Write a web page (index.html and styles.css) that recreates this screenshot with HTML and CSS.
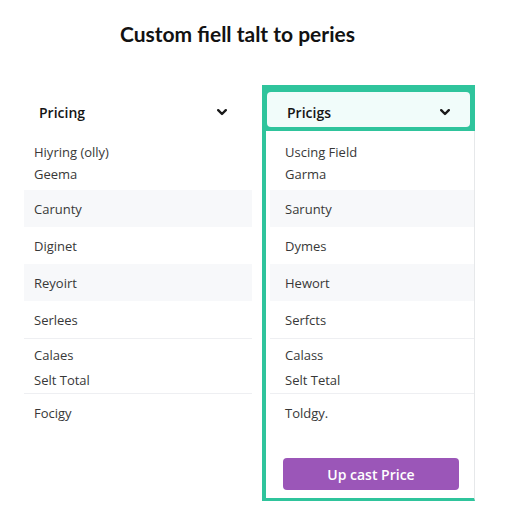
FILE: index.html
```html
<!DOCTYPE html>
<html>
<head>
<meta charset="utf-8">
<link rel="stylesheet" href="styles.css">
</head>
<body>
<div class="page">
  <h1 class="title">Custom fiell talt to peries</h1>
  <div class="columns">
    <div class="panel-left">
      <div class="head-left">
        <span class="head-label">Pricing</span>
        <svg class="chev" width="10" height="7" viewBox="0 0 10 7"><path d="M1.2 1.2 L5 5 L8.8 1.2" fill="none" stroke="#1a1a1a" stroke-width="2.4" stroke-linecap="round" stroke-linejoin="round"/></svg>
      </div>
      <div class="list">
        <div class="row group first"><span>Hiyring (olly)</span><span>Geema</span></div>
        <div class="row stripe">Caruntу</div>
        <div class="row">Diginet</div>
        <div class="row stripe">Reyoirt</div>
        <div class="row line">Serlees</div>
        <div class="row group second line"><span>Calaes</span><span>Selt Total</span></div>
        <div class="row">Focigy</div>
      </div>
    </div>
    <div class="panel-right">
      <div class="head-wrap">
        <div class="head-right">
          <span class="head-label">Pricigs</span>
          <svg class="chev" width="10" height="7" viewBox="0 0 10 7"><path d="M1.2 1.2 L5 5 L8.8 1.2" fill="none" stroke="#1a1a1a" stroke-width="2.4" stroke-linecap="round" stroke-linejoin="round"/></svg>
        </div>
      </div>
      <div class="body-right">
        <div class="list">
          <div class="row group first"><span>Uscing Field</span><span>Garma</span></div>
          <div class="row stripe">Saruntу</div>
          <div class="row">Dymes</div>
          <div class="row stripe">Hewort</div>
          <div class="row line">Serfcts</div>
          <div class="row group second line"><span>Calass</span><span>Selt Tetal</span></div>
          <div class="row">Toldgy.</div>
        </div>
        <button class="cta">Up cast Price</button>
      </div>
    </div>
  </div>
</div>
</body>
</html>
```

FILE: styles.css
```css
html, body {
  margin: 0;
  padding: 0;
  background: #ffffff;
}
body {
  width: 512px;
  height: 512px;
  overflow: hidden;
  font-family: "Open Sans", "Liberation Sans", sans-serif;
  color: #2e2e2e;
}
.page {
  padding-top: 19px;
}
.title {
  margin: 0 0 0 120px;
  font-family: Lato, "Open Sans", sans-serif;
  font-weight: 700;
  font-size: 21px;
  line-height: 29px;
  color: #121212;
}
.columns {
  display: flex;
  margin-top: 37px;
  padding-left: 24px;
  gap: 10px;
  align-items: flex-start;
}
.panel-left {
  width: 228px;
  padding-top: 7px;
}
.head-left {
  height: 35px;
  box-sizing: border-box;
  padding: 5px 25px 0 15px;
  display: flex;
  align-items: center;
  justify-content: space-between;
  margin-bottom: 4px;
}
.head-label {
  font-family: "Open Sans", sans-serif;
  font-weight: 600;
  font-size: 14px;
  color: #151515;
}
.chev {
  display: block;
}
.list {
  display: flex;
  flex-direction: column;
}
.row {
  font-size: 13px;
  line-height: 18px;
  padding: 0 0 0 10px;
  height: 37px;
  display: flex;
  align-items: center;
  color: #383838;
}
.row.stripe {
  background: #f7f8fa;
}
.row.line {
  border-bottom: 1px solid #eeeff2;
}
.row.group {
  flex-direction: column;
  align-items: flex-start;
  justify-content: flex-start;
  box-sizing: border-box;
}
.row.group span {
  display: block;
  line-height: 22px;
}
.row.first {
  height: 59px;
  padding-top: 10px;
}
.row.second {
  height: 55px;
  padding-top: 4px;
}
.row.second span {
  line-height: 25px;
}
.panel-right {
  width: 213px;
}
.head-wrap {
  background: #2fc49c;
  padding: 7px 5px 4px 5px;
}
.head-right {
  height: 35px;
  box-sizing: border-box;
  padding: 5px 20px 0 20px;
  background: #f1fcfa;
  border-radius: 4px;
  display: flex;
  align-items: center;
  justify-content: space-between;
}
.body-right {
  border-left: 4px solid #2fc49c;
  border-right: 1px solid #e6e8ea;
  border-bottom: 3px solid #2fc49c;
  padding: 0 0 8px 4px;
  background: #fff;
}
.body-right .row {
  padding-left: 15px;
}
.cta {
  display: block;
  margin: 27px 15px 0 13px;
  width: 176px;
  height: 32px;
  border: none;
  border-radius: 4px;
  background: #9b56b8;
  color: #fff;
  font-family: "Open Sans", sans-serif;
  font-weight: 600;
  font-size: 14px;
  padding: 0;
}
```
